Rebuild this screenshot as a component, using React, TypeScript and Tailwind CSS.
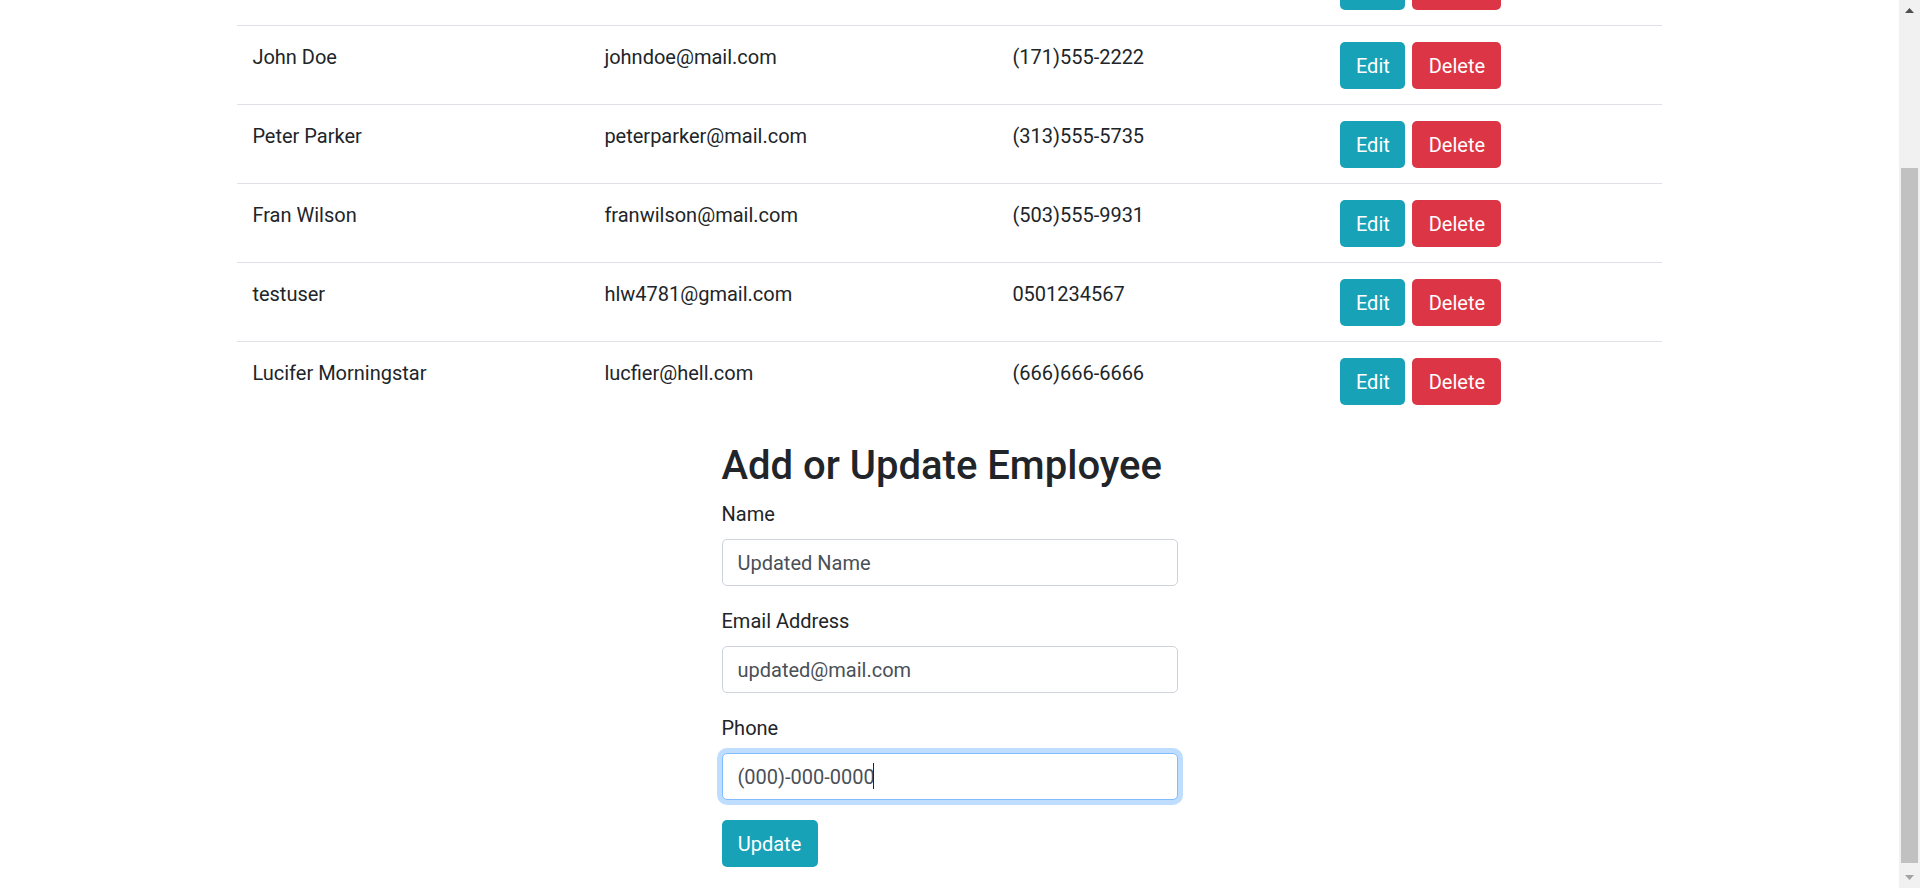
import React from 'react'

type Employee = {
  name: string
  email: string
  phone: string
}

const employees: Employee[] = [
  { name: 'John Doe', email: 'johndoe@mail.com', phone: '(171)555-2222' },
  { name: 'Peter Parker', email: 'peterparker@mail.com', phone: '(313)555-5735' },
  { name: 'Fran Wilson', email: 'franwilson@mail.com', phone: '(503)555-9931' },
  { name: 'testuser', email: 'hlw4781@gmail.com', phone: '0501234567' },
  { name: 'Lucifer Morningstar', email: 'lucfier@hell.com', phone: '(666)666-6666' },
]

const cell = 'border-t border-[#dee2e6] px-[15px] pt-[16px] pb-[15px] text-left align-top font-normal'

function Field({ label, value, focused }: { label: string; value: string; focused?: boolean }) {
  return (
    <div className="mb-[20px]">
      <label className="mb-[10px] block">{label}</label>
      <div className="relative">
        <input
          type="text"
          defaultValue={value}
          readOnly
          className={
            focused
              ? 'block h-[47px] w-full rounded-[5px] border border-[#80bdff] bg-white px-[15px] text-[#495057] shadow-[0_0_0_5px_rgba(0,123,255,0.25)] outline-none'
              : 'block h-[47px] w-full rounded-[5px] border border-[#ced4da] bg-white px-[15px] text-[#495057] outline-none'
          }
        />
        {/* text caret of the focused field */}
        {focused ? <span className="absolute top-[10px] left-[151px] h-[26px] w-px bg-[#212529]" /> : null}
      </div>
    </div>
  )
}

function Scrollbar() {
  return (
    <div className="flex w-[21px] shrink-0 flex-col items-center bg-[#f1f1f1]">
      <div className="flex h-[21px] w-full items-center justify-center">
        <svg width="9" height="5" viewBox="0 0 9 5">
          <path d="M0 5 L4.5 0 L9 5 Z" fill="#505050" />
        </svg>
      </div>
      <div className="h-[147px]" />
      <div className="h-[695px] w-[17px] bg-[#c1c1c1]" />
      <div className="flex-1" />
      <div className="flex h-[21px] w-full items-center justify-center">
        <svg width="9" height="5" viewBox="0 0 9 5">
          <path d="M0 0 L9 0 L4.5 5 Z" fill="#a3a3a3" />
        </svg>
      </div>
    </div>
  )
}

export default function App() {
  return (
    <div className="flex h-[888px] w-full overflow-hidden bg-white font-['Segoe_UI',Roboto,'Noto_Sans',sans-serif] text-[20px] leading-[30px] text-[#212529]">
      <main className="min-w-0 flex-1">
        <table className="mx-auto mb-[22px] -mt-[54px] w-[75%] table-fixed border-collapse">
          <colgroup>
            <col className="w-[352px]" />
            <col className="w-[408px]" />
            <col className="w-[328px]" />
            <col />
          </colgroup>
          <tbody>
            {/* row scrolled out of view: only the bottom of its buttons shows */}
            <tr>
              <td className={cell} />
              <td className={cell} />
              <td className={cell} />
              <td className={cell}>
                <div className="flex gap-[7px]">
                  <span className="block h-[47px] w-[65px] rounded-[5px] bg-[#17a2b8]" />
                  <span className="block h-[47px] w-[89px] rounded-[5px] bg-[#dc3545]" />
                </div>
              </td>
            </tr>
            {employees.map((e) => (
              <tr key={e.email}>
                <td className={cell}>{e.name}</td>
                <td className={cell}>{e.email}</td>
                <td className={cell}>{e.phone}</td>
                <td className={cell}>
                  <div className="flex gap-[7px]">
                    <button className="h-[47px] w-[65px] rounded-[5px] bg-[#17a2b8] text-white">Edit</button>
                    <button className="h-[47px] w-[89px] rounded-[5px] bg-[#dc3545] text-white">Delete</button>
                  </div>
                </td>
              </tr>
            ))}
          </tbody>
        </table>

        <form className="mx-auto w-[456px]" onSubmit={(ev) => ev.preventDefault()}>
          <h2 className="mt-[1px] mb-[9px] text-[40px] leading-[48px] font-medium">Add or Update Employee</h2>
          <Field label="Name" value="Updated Name" />
          <Field label="Email Address" value="updated@mail.com" />
          <Field label="Phone" value="(000)-000-0000" focused />
          <button type="submit" className="h-[47px] w-[96px] rounded-[5px] bg-[#17a2b8] text-white">
            Update
          </button>
        </form>
      </main>
      <Scrollbar />
    </div>
  )
}
